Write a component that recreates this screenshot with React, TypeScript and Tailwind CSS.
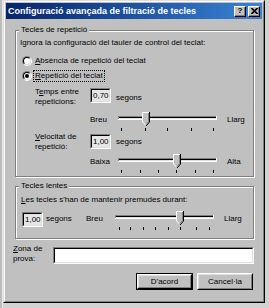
import type { ReactNode } from 'react'

function Radio({ checked }: { checked?: boolean }) {
  return (
    <span className="flex w-[10px] h-[10px] shrink-0 rounded-full border border-t-[#808080] border-l-[#808080] border-r-white border-b-white">
      <span className="flex flex-1 items-center justify-center rounded-full border border-t-black border-l-black border-r-[#dfdfdf] border-b-[#dfdfdf] bg-white">
        {checked && <span className="w-[4px] h-[4px] rounded-full bg-black" />}
      </span>
    </span>
  )
}

function Field({ value, className = '' }: { value: string; className?: string }) {
  return (
    <div className={`w-[21px] h-[15px] shrink-0 border border-t-[#808080] border-l-[#808080] border-r-white border-b-white ${className}`}>
      <div className="h-full border border-t-black border-l-black border-r-[#dfdfdf] border-b-[#dfdfdf] bg-[#e6e6e6] pl-[1px] leading-[12px]">
        {value}
      </div>
    </div>
  )
}

function Button({ children, isDefault }: { children: ReactNode; isDefault?: boolean }) {
  return (
    <div className={`h-[17px] ${isDefault ? 'w-[57px] border border-black' : 'w-[56px]'}`}>
      <div className="h-full border border-t-white border-l-white border-r-black border-b-black">
        <div className="h-full flex items-center justify-center border border-t-[#dfdfdf] border-l-[#dfdfdf] border-r-[#808080] border-b-[#808080]">
          {children}
        </div>
      </div>
    </div>
  )
}

// trackbar: channel, tick marks and a down-pointing thumb
function Slider({ left, ticks }: { left: number; ticks: number[] }) {
  const l = left
  const r = left + 8
  const c = left + 4
  return (
    <svg width="103" height="21" viewBox="0 0 103 21" className="shrink-0">
      <rect x="2" y="5" width="99" height="1" fill="#808080" />
      <rect x="2" y="5" width="1" height="4" fill="#808080" />
      <rect x="3" y="6" width="97" height="1" fill="#000" />
      <rect x="3" y="7" width="97" height="1" fill="#dfdfdf" />
      <rect x="2" y="8" width="99" height="1" fill="#fff" />
      <rect x="100" y="5" width="1" height="4" fill="#fff" />
      {ticks.map((t) => (
        <rect key={t} x={t} y="17" width="1" height="3" fill="#000" />
      ))}
      <polygon points={`${l},1 ${r},1 ${r},11 ${c},15 ${l},11`} fill="#c0c0c0" />
      <polyline points={`${l + 0.5},11 ${l + 0.5},1.5 ${r - 0.5},1.5`} stroke="#fff" fill="none" />
      <line x1={l + 0.5} y1="11" x2={c} y2="14.5" stroke="#fff" />
      <polyline points={`${r - 0.5},1 ${r - 0.5},11 ${c},15`} stroke="#000" fill="none" />
      <polyline points={`${r - 1.5},2 ${r - 1.5},10.5 ${c},13.5`} stroke="#808080" fill="none" />
    </svg>
  )
}

function Group({ title, className, children }: { title: string; className: string; children: ReactNode }) {
  return (
    <div className={`relative w-[239px] border border-[#808080] shadow-[inset_1px_1px_0_#fff,1px_1px_0_#fff] ${className}`}>
      <span className="absolute -top-[6px] left-[3px] px-[2px] bg-[#c0c0c0] leading-[10px]">{title}</span>
      {children}
    </div>
  )
}

export default function App() {
  return (
    <div className="w-[269px] h-[308px] flex overflow-hidden bg-[#d2d2d2] text-[8px] text-black font-['Liberation_Sans',Arial,sans-serif]">
      <div className="w-[3px] shrink-0 bg-[#bdbdbd] border-r border-[#e8e8e8]" />
      <div className="w-[262px] h-[303px] shrink-0 border border-t-[#dfdfdf] border-l-[#dfdfdf] border-r-black border-b-black">
        <div className="h-full flex flex-col p-[1px] bg-[#c0c0c0] border border-t-white border-l-white border-r-[#808080] border-b-[#808080]">
          {/* title bar */}
          <div className="h-[16px] flex items-center pl-[2px] pr-[2px] bg-gradient-to-r from-[#08246b] to-[#3a84d8]">
            <span className="flex-1 font-bold text-[9px] text-white leading-[10px]">
              Configuració avançada de filtració de tecles
            </span>
            <div className="flex gap-[2px]">
              <div className="w-[12px] h-[11px] flex items-center justify-center bg-[#c0c0c0] border border-t-white border-l-white border-r-black border-b-black shadow-[inset_-1px_-1px_0_#808080] font-bold text-[8px] leading-[8px]">
                ?
              </div>
              <div className="w-[12px] h-[11px] flex items-center justify-center bg-[#c0c0c0] border border-t-white border-l-white border-r-black border-b-black shadow-[inset_-1px_-1px_0_#808080]">
                <svg width="7" height="6" viewBox="0 0 7 6">
                  <path d="M0.5 0 L6.5 6 M6.5 0 L0.5 6" stroke="#000" strokeWidth="1.6" />
                </svg>
              </div>
            </div>
          </div>

          <div className="flex flex-col pl-[9px]">
            <Group title="Tecles de repetició" className="mt-[11px] h-[147px]">
              <div className="mt-[7px] pl-[4px] leading-[10px]">
                Ignora la configuració del tauler de control del teclat:
              </div>
              <div className="mt-[5px] h-[15px] flex items-center gap-[3px] pl-[6px]">
                <Radio />
                <span className="leading-[10px]">
                  <u>A</u>bsència de repetició del teclat
                </span>
              </div>
              <div className="h-[15px] flex items-center gap-[2px] pl-[6px]">
                <Radio checked />
                <span className="leading-[10px] px-[1px] outline outline-1 outline-dotted outline-black">
                  <u>R</u>epetició del teclat
                </span>
              </div>
              <div className="mt-[5px] flex pl-[19px]">
                <div className="w-[55px] -mt-[1px] leading-[10px]">
                  T<u>e</u>mps entre
                  <br />
                  repeticions:
                </div>
                <Field value="0,70" />
                <span className="ml-[5px] self-center leading-[10px]">segons</span>
              </div>
              <div className="mt-[4px] flex pl-[74px]">
                <span className="w-[26px] mt-[4px] leading-[10px]">Breu</span>
                <Slider left={26} ticks={[5, 29, 51, 75, 97]} />
                <span className="ml-[8px] mt-[4px] leading-[10px]">Llarg</span>
              </div>
              <div className="flex pl-[19px]">
                <div className="w-[55px] leading-[10px]">
                  <u>V</u>elocitat de
                  <br />
                  repetició:
                </div>
                <Field value="1,00" className="mt-[2px]" />
                <span className="ml-[5px] mt-[5px] leading-[10px]">segons</span>
              </div>
              <div className="mt-[1px] flex pl-[74px]">
                <span className="w-[26px] mt-[4px] leading-[10px]">Baixa</span>
                <Slider left={57} ticks={[5, 24, 42, 60, 79, 97]} />
                <span className="ml-[8px] mt-[4px] leading-[10px]">Alta</span>
              </div>
            </Group>

            <Group title="Tecles lentes" className="mt-[9px] h-[53px]">
              <div className="mt-[8px] pl-[5px] leading-[10px]">
                <u>L</u>es tecles s'han de mantenir premudes durant:
              </div>
              <div className="mt-[5px] flex pl-[6px]">
                <Field value="1,00" className="mt-[2px]" />
                <span className="w-[43px] pl-[3px] mt-[4px] leading-[10px]">segons</span>
                <span className="w-[27px] mt-[4px] leading-[10px]">Breu</span>
                <Slider left={63} ticks={[6, 17, 30, 42, 55, 67, 83, 96]} />
                <span className="ml-[8px] mt-[4px] leading-[10px]">Llarg</span>
              </div>
            </Group>

            <div className="mt-[5px] -ml-[2px] flex">
              <div className="w-[40px] leading-[10px]">
                <u>Z</u>ona de
                <br />
                prova:
              </div>
              <div className="mt-[3px] w-[201px] h-[17px] border border-t-[#808080] border-l-[#808080] border-r-white border-b-white">
                <div className="h-full bg-white border border-t-black border-l-black border-r-[#dfdfdf] border-b-[#dfdfdf]" />
              </div>
            </div>

            <div className="mt-[9px] w-[238px] flex justify-end gap-[4px]">
              <Button isDefault>D'acord</Button>
              <Button>Cancel·la</Button>
            </div>
          </div>
        </div>
      </div>
    </div>
  )
}
